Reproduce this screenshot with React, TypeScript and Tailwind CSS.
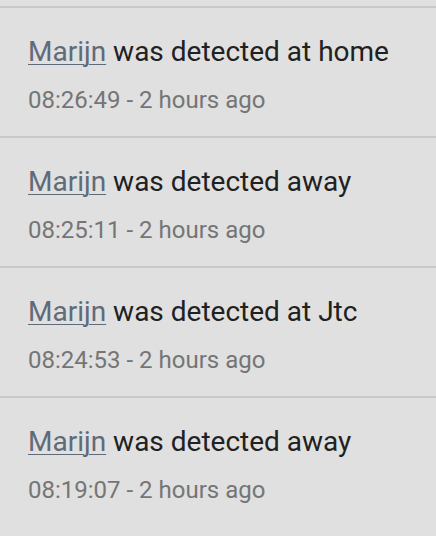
import React from "react";

const items = [
  { state: "was detected at home", time: "08:26:49 - 2 hours ago" },
  { state: "was detected away", time: "08:25:11 - 2 hours ago" },
  { state: "was detected at Jtc", time: "08:24:53 - 2 hours ago" },
  { state: "was detected away", time: "08:19:07 - 2 hours ago" },
];

export default function App() {
  return (
    <div
      className="w-[436px] h-[536px] overflow-hidden bg-[#e0e0e0]"
      style={{ fontFamily: "Roboto, 'Liberation Sans', sans-serif" }}
    >
      <div className="h-[6px]" />
      {items.map((it, i) => (
        <div key={i} className="border-t-2 border-[#c8c8c8] pl-7 pr-4 pt-6 pb-5">
          <div className="text-[28px] leading-[40px] text-[#212121] whitespace-nowrap">
            <a className="text-[#5f6b78] underline decoration-1 underline-offset-[3px]">Marijn</a>{" "}
            {it.state}
          </div>
          <div className="mt-3 text-[24px] leading-[32px] text-[#757575] whitespace-nowrap">
            {it.time}
          </div>
        </div>
      ))}
    </div>
  );
}
